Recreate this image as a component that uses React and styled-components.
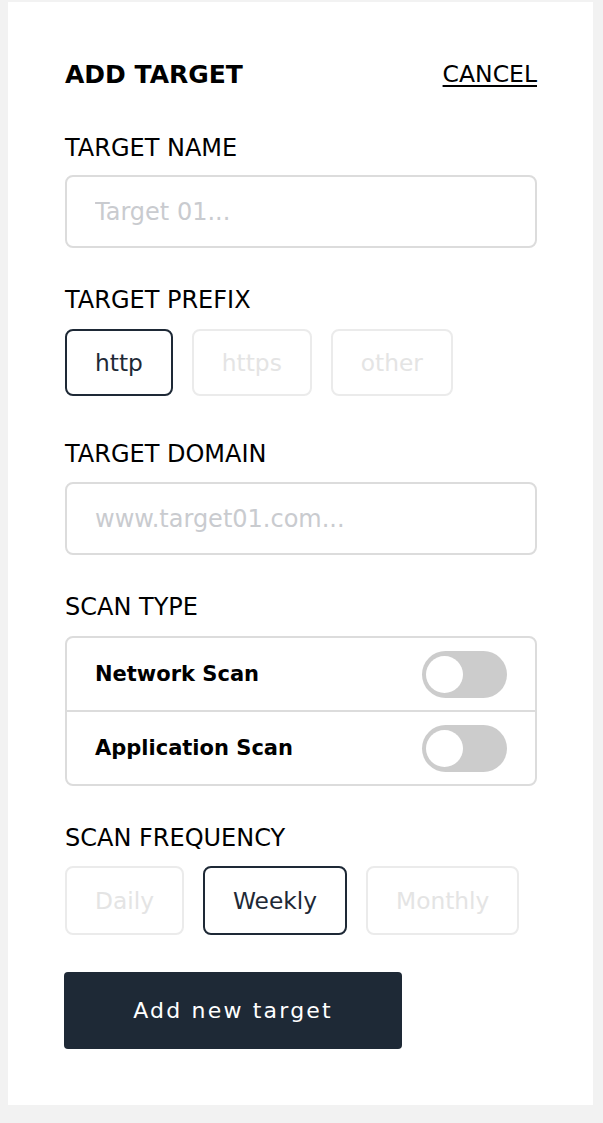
import React, { useState } from "react";
import styled, { createGlobalStyle } from "styled-components";

const Global = createGlobalStyle`
  html, body { margin: 0; padding: 0; background: #f2f2f2; }
  body { padding: 2px 10px 18px 8px; font-family: "DejaVu Sans", "Noto Sans", sans-serif; }
  * { box-sizing: border-box; }
`;

const Card = styled.div`
  width: 585px;
  min-height: 1103px;
  background: #fff;
  padding: 58px 56px 56px 57px;
  display: flex;
  flex-direction: column;
`;

const Header = styled.div`
  display: flex;
  justify-content: space-between;
  align-items: center;
  height: 28px;
  margin-bottom: 48px;
`;

const Title = styled.h1`
  margin: 0;
  font-size: 25px;
  font-weight: 700;
  color: #000;
`;

const Cancel = styled.a`
  font-size: 23.5px;
  color: #000;
  text-decoration: underline;
  text-underline-offset: 3px;
  cursor: pointer;
`;

const Group = styled.div`
  display: flex;
  flex-direction: column;
  margin-bottom: ${(p) => p.$mb || 40}px;
`;

const Label = styled.label`
  font-size: 24px;
  line-height: 24px;
  color: #000;
  margin-bottom: ${(p) => p.$mb || 15}px;
`;

const Input = styled.input`
  height: 73px;
  border: 2px solid #dcdcdc;
  border-radius: 8px;
  padding: 0 28px;
  font-family: inherit;
  font-size: 24px;
  color: #1e2936;
  outline: none;
  &::placeholder { color: #c9cbcf; }
`;

const Chips = styled.div`
  display: flex;
  gap: 19px;
`;

const Chip = styled.button`
  height: ${(p) => p.$h || 67}px;
  padding: 0 28px;
  background: #fff;
  border: 2px solid ${(p) => (p.$active ? "#1e2936" : "#ebebeb")};
  border-radius: 8px;
  font-family: inherit;
  font-size: 23.3px;
  color: ${(p) => (p.$active ? "#1e2936" : "#e4e4e4")};
  cursor: pointer;
`;

const Box = styled.div`
  border: 2px solid #dcdcdc;
  border-radius: 8px;
  display: flex;
  flex-direction: column;
`;

const Row = styled.div`
  height: ${(p) => (p.$first ? 72 : 74)}px;
  display: flex;
  align-items: center;
  justify-content: space-between;
  padding: 0 28px;
  border-top: ${(p) => (p.$first ? "none" : "2px solid #dcdcdc")};
`;

const RowLabel = styled.span`
  font-size: 21px;
  font-weight: 700;
  color: #000;
`;

const Toggle = styled.button`
  width: 85px;
  height: 47px;
  border-radius: 24px;
  border: none;
  background: ${(p) => (p.$on ? "#1e2936" : "#cccccc")};
  padding: 0 4px;
  display: flex;
  align-items: center;
  justify-content: ${(p) => (p.$on ? "flex-end" : "flex-start")};
  cursor: pointer;
`;

const Knob = styled.span`
  width: 37px;
  height: 37px;
  border-radius: 50%;
  background: #fff;
`;

const Submit = styled.button`
  align-self: flex-start;
  width: 338px;
  height: 77px;
  margin-left: -1px;
  border: none;
  border-radius: 4px;
  background: #1e2936;
  color: #fff;
  font-family: inherit;
  font-size: 22px;
  font-weight: 400;
  letter-spacing: 2.2px;
  cursor: pointer;
`;

export default function App() {
  const [prefix, setPrefix] = useState("http");
  const [freq, setFreq] = useState("Weekly");
  const [scan, setScan] = useState({ network: false, app: false });

  return (
    <>
      <Global />
      <Card>
        <Header>
          <Title>ADD TARGET</Title>
          <Cancel>CANCEL</Cancel>
        </Header>

        <Group>
          <Label>TARGET NAME</Label>
          <Input placeholder="Target 01..." />
        </Group>

        <Group $mb={46}>
          <Label $mb={17}>TARGET PREFIX</Label>
          <Chips>
            {["http", "https", "other"].map((p) => (
              <Chip key={p} $active={prefix === p} onClick={() => setPrefix(p)}>
                {p}
              </Chip>
            ))}
          </Chips>
        </Group>

        <Group>
          <Label $mb={16}>TARGET DOMAIN</Label>
          <Input placeholder="www.target01.com..." />
        </Group>

        <Group>
          <Label $mb={17}>SCAN TYPE</Label>
          <Box>
            <Row $first>
              <RowLabel>Network Scan</RowLabel>
              <Toggle $on={scan.network} onClick={() => setScan({ ...scan, network: !scan.network })}>
                <Knob />
              </Toggle>
            </Row>
            <Row>
              <RowLabel>Application Scan</RowLabel>
              <Toggle $on={scan.app} onClick={() => setScan({ ...scan, app: !scan.app })}>
                <Knob />
              </Toggle>
            </Row>
          </Box>
        </Group>

        <Group $mb={37}>
          <Label $mb={16}>SCAN FREQUENCY</Label>
          <Chips>
            {["Daily", "Weekly", "Monthly"].map((f) => (
              <Chip key={f} $h={69} $active={freq === f} onClick={() => setFreq(f)}>
                {f}
              </Chip>
            ))}
          </Chips>
        </Group>

        <Submit>Add new target</Submit>
      </Card>
    </>
  );
}
